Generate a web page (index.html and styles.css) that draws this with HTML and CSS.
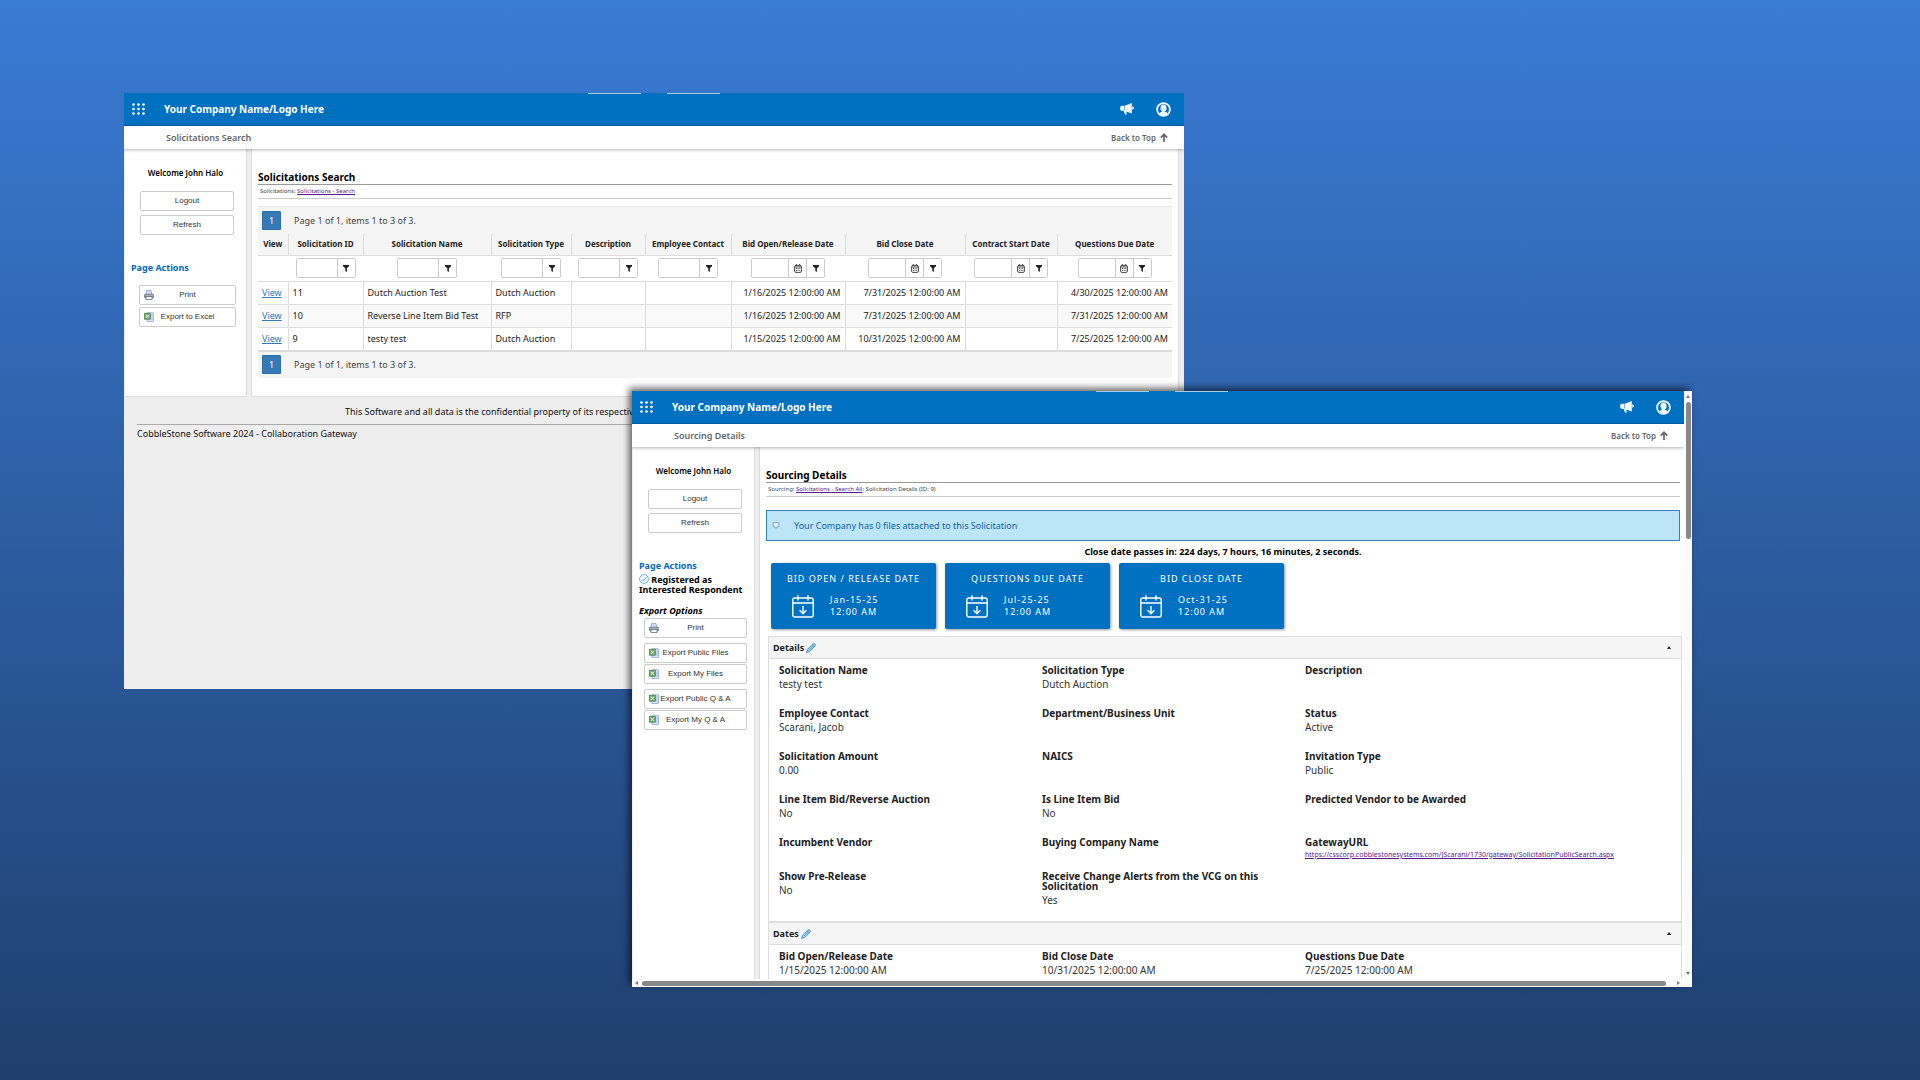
FILE: index.html
```html
<!DOCTYPE html>
<html lang="en">
<head>
<meta charset="utf-8">
<title>Collaboration Gateway</title>
<link rel="stylesheet" href="styles.css">
</head>
<body>
<svg class="defs" aria-hidden="true">
  <symbol id="dots" viewBox="0 0 13 12"><g fill="#fff"><circle cx="1.5" cy="1.5" r="1.3"/><circle cx="6.5" cy="1.5" r="1.3"/><circle cx="11.5" cy="1.5" r="1.3"/><circle cx="1.5" cy="6" r="1.3"/><circle cx="6.5" cy="6" r="1.3"/><circle cx="11.5" cy="6" r="1.3"/><circle cx="1.5" cy="10.5" r="1.3"/><circle cx="6.5" cy="10.5" r="1.3"/><circle cx="11.5" cy="10.5" r="1.3"/></g></symbol>
  <symbol id="horn" viewBox="0 0 14 12"><g fill="#f2f8fc"><path d="M4.600 2.800 L11.800 0 V10.400 L4.600 7.900Z"/><path d="M1.500 2.700H4.200V7.900H1.500Q.1 7.500.1 5.300T1.500 2.700Z"/><path d="M3.500 7.500H6L6.800 11Q6 12 5 11.500Z"/><path d="M12.200 3.300Q14 3.800 14 5T12.200 6.800Z"/></g></symbol>
  <symbol id="user" viewBox="0 0 15 15"><circle cx="7.500" cy="7.500" r="6.400" fill="none" stroke="#f2f8fc" stroke-width="1.800"/><ellipse cx="7.500" cy="6.200" rx="3" ry="3.600" fill="#f2f8fc"/><path d="M3 12.200Q3.500 10.200 6.200 9.800V8.500H8.800V9.800Q11.500 10.200 12 12.200Q10 14 7.500 14T3 12.200Z" fill="#f2f8fc"/></symbol>
  <symbol id="up" viewBox="0 0 8 9"><path d="M4 9V1.500M.8 4.600L4 1.300L7.200 4.600" fill="none" stroke="#666" stroke-width="1.700"/></symbol>
  <symbol id="funnel" viewBox="0 0 6 7"><path d="M0 0H6V1.200L3.900 3.200V7L2.300 6V3.200L0 1.200Z" fill="#222"/></symbol>
  <symbol id="cal" viewBox="0 0 8 9"><rect x=".6" y="1.400" width="6.800" height="7" rx="1.300" fill="none" stroke="#444"/><path d="M.6 3H7.400M2.300 0V2M5.700 0V2" stroke="#444" fill="none"/><path d="M2 4.600H6.200M2 6.400H6.200" stroke="#555" stroke-dasharray="1 .6" fill="none"/></symbol>
  <symbol id="bigcal" viewBox="0 0 22 23"><g fill="none" stroke="#fff" stroke-width="1.400"><rect x=".8" y="3" width="20.400" height="19" rx="2"/><path d="M1 8H21M6 .3V5.500M16 .3V5.500M11 11V18.500M7.600 15.300L11 18.700L14.400 15.300"/></g></symbol>
  <symbol id="printer" viewBox="0 0 10 10"><path d="M2.500.5H7L8 4.500H2Z" fill="#cfe2f8" stroke="#7d9cc5" stroke-width=".7"/><rect x=".5" y="4.200" width="9" height="3.800" rx="1" fill="#a9b0ba" stroke="#59626e" stroke-width=".7"/><rect x="2" y="6.500" width="6" height="3" fill="#eef4fb" stroke="#59626e" stroke-width=".7"/></symbol>
  <symbol id="excel" viewBox="0 0 10 10"><rect x="3" y=".8" width="6.500" height="8.700" fill="#dce7fa" stroke="#7f9fd8" stroke-width=".7"/><path d="M6.500 3H9M6.500 5H9M6.500 7H9" stroke="#8aa9dd" stroke-width=".6"/><rect x=".4" y="1.200" width="6" height="6" fill="#6aa56a" stroke="#3f7a45" stroke-width=".6"/><path d="M1.800 2.600L5 6M5 2.600L1.800 6" stroke="#fff" stroke-width="1"/></symbol>
  <symbol id="pencil" viewBox="0 0 10 10"><path d="M.6 9.400L1.400 6.400L6.800 1Q8 .2 9 1.100T9 3.200L3.600 8.500Z" fill="#9fd0f0" stroke="#3f87bd" stroke-width=".8"/><path d="M2.800 7.200L7.500 2.500M5.900 1.900L8.100 4.100" stroke="#3f87bd" stroke-width=".6"/></symbol>
  <symbol id="check" viewBox="0 0 10 10"><circle cx="5" cy="5" r="4.400" fill="none" stroke="#3f9ad8" stroke-width=".8"/><path d="M2.800 5.200L4.500 6.900L7.800 2.900" fill="none" stroke="#3f9ad8" stroke-width=".9"/></symbol>
  <symbol id="bubble" viewBox="0 0 8 7"><path d="M1.200.6H6.800V4.800H5L4 6.400L3 4.800H1.200Z" fill="#e6f3ff" stroke="#7a90c8" stroke-width=".8"/></symbol>
</svg>

<main class="desktop">
  <section class="window search-window">
    <div class="view">
      <header class="topbar">
        <svg class="i-dots"><use href="#dots"/></svg>
        <span class="brand">Your Company Name/Logo Here</span>
        <svg class="i-horn"><use href="#horn"/></svg>
        <svg class="i-user"><use href="#user"/></svg>
        <i class="tick tick-a"></i><i class="tick tick-b"></i>
      </header>
      <div class="subbar"><span class="crumb-title">Solicitations Search</span><a class="top-link" href="#">Back to Top <svg class="i-up"><use href="#up"/></svg></a></div>
      <div class="columns">
        <aside class="side">
          <p class="welcome">Welcome John Halo</p>
          <div class="session"><button class="btn">Logout</button><button class="btn">Refresh</button></div>
          <h2 class="side-head">Page Actions</h2>
          <div class="actions">
            <button class="btn"><svg class="i-btn"><use href="#printer"/></svg>Print</button>
            <button class="btn"><svg class="i-btn"><use href="#excel"/></svg>Export to Excel</button>
          </div>
        </aside>
        <div class="content">
          <h1 class="title">Solicitations Search</h1>
          <nav class="path">Solicitations: <a href="#">Solicitations - Search</a></nav>
          <div class="grid">
            <div class="pager"><button class="page">1</button>Page 1 of 1, items 1 to 3 of 3.</div>
            <table class="data">
              <colgroup><col class="w30"><col class="w75"><col class="w128"><col class="w80"><col class="w74"><col class="w86"><col class="w114"><col class="w120"><col class="w92"><col></colgroup>
              <thead>
                <tr><th>View</th><th>Solicitation ID</th><th>Solicitation Name</th><th>Solicitation Type</th><th>Description</th><th>Employee Contact</th><th>Bid Open/Release Date</th><th>Bid Close Date</th><th>Contract Start Date</th><th>Questions Due Date</th></tr>
                <tr class="filters">
                  <td></td>
                  <td><div class="filter"><input aria-label="Filter Solicitation ID"><button aria-label="Filter"><svg class="i-funnel"><use href="#funnel"/></svg></button></div></td>
                  <td><div class="filter"><input aria-label="Filter Solicitation Name"><button aria-label="Filter"><svg class="i-funnel"><use href="#funnel"/></svg></button></div></td>
                  <td><div class="filter"><input aria-label="Filter Solicitation Type"><button aria-label="Filter"><svg class="i-funnel"><use href="#funnel"/></svg></button></div></td>
                  <td><div class="filter"><input aria-label="Filter Description"><button aria-label="Filter"><svg class="i-funnel"><use href="#funnel"/></svg></button></div></td>
                  <td><div class="filter"><input aria-label="Filter Employee Contact"><button aria-label="Filter"><svg class="i-funnel"><use href="#funnel"/></svg></button></div></td>
                  <td><div class="filter date"><input aria-label="Filter Bid Open/Release Date"><button aria-label="Calendar"><svg class="i-cal"><use href="#cal"/></svg></button><button aria-label="Filter"><svg class="i-funnel"><use href="#funnel"/></svg></button></div></td>
                  <td><div class="filter date"><input aria-label="Filter Bid Close Date"><button aria-label="Calendar"><svg class="i-cal"><use href="#cal"/></svg></button><button aria-label="Filter"><svg class="i-funnel"><use href="#funnel"/></svg></button></div></td>
                  <td><div class="filter date"><input aria-label="Filter Contract Start Date"><button aria-label="Calendar"><svg class="i-cal"><use href="#cal"/></svg></button><button aria-label="Filter"><svg class="i-funnel"><use href="#funnel"/></svg></button></div></td>
                  <td><div class="filter date"><input aria-label="Filter Questions Due Date"><button aria-label="Calendar"><svg class="i-cal"><use href="#cal"/></svg></button><button aria-label="Filter"><svg class="i-funnel"><use href="#funnel"/></svg></button></div></td>
                </tr>
              </thead>
              <tbody>
                <tr><td><a href="#">View</a></td><td>11</td><td>Dutch Auction Test</td><td>Dutch Auction</td><td></td><td></td><td class="num">1/16/2025 12:00:00 AM</td><td class="num">7/31/2025 12:00:00 AM</td><td></td><td class="num">4/30/2025 12:00:00 AM</td></tr>
                <tr><td><a href="#">View</a></td><td>10</td><td>Reverse Line Item Bid Test</td><td>RFP</td><td></td><td></td><td class="num">1/16/2025 12:00:00 AM</td><td class="num">7/31/2025 12:00:00 AM</td><td></td><td class="num">7/31/2025 12:00:00 AM</td></tr>
                <tr><td><a href="#">View</a></td><td>9</td><td>testy test</td><td>Dutch Auction</td><td></td><td></td><td class="num">1/15/2025 12:00:00 AM</td><td class="num">10/31/2025 12:00:00 AM</td><td></td><td class="num">7/25/2025 12:00:00 AM</td></tr>
              </tbody>
            </table>
            <div class="pager pager-end"><button class="page">1</button>Page 1 of 1, items 1 to 3 of 3.</div>
          </div>
        </div>
      </div>
      <footer class="foot">
        <p class="notice">This Software and all data is the confidential property of its respective</p>
        <p class="copy">CobbleStone Software 2024 - Collaboration Gateway</p>
      </footer>
    </div>
  </section>

  <section class="window details-window">
    <div class="view">
      <header class="topbar">
        <svg class="i-dots"><use href="#dots"/></svg>
        <span class="brand">Your Company Name/Logo Here</span>
        <svg class="i-horn"><use href="#horn"/></svg>
        <svg class="i-user"><use href="#user"/></svg>
        <i class="tick tick-a"></i><i class="tick tick-b"></i>
      </header>
      <div class="subbar"><span class="crumb-title">Sourcing Details</span><a class="top-link" href="#">Back to Top <svg class="i-up"><use href="#up"/></svg></a></div>
      <div class="columns">
        <aside class="side">
          <p class="welcome">Welcome John Halo</p>
          <div class="session"><button class="btn">Logout</button><button class="btn">Refresh</button></div>
          <h2 class="side-head">Page Actions</h2>
          <p class="registered"><svg class="i-check"><use href="#check"/></svg> Registered as Interested Respondent</p>
          <h3 class="export-head">Export Options</h3>
          <div class="exports">
            <button class="btn"><svg class="i-btn"><use href="#printer"/></svg>Print</button>
            <div class="pair">
              <button class="btn"><svg class="i-btn"><use href="#excel"/></svg>Export Public Files</button>
              <button class="btn"><svg class="i-btn"><use href="#excel"/></svg>Export My Files</button>
            </div>
            <div class="pair">
              <button class="btn"><svg class="i-btn"><use href="#excel"/></svg>Export Public Q &amp; A</button>
              <button class="btn"><svg class="i-btn"><use href="#excel"/></svg>Export My Q &amp; A</button>
            </div>
          </div>
        </aside>
        <div class="content">
          <h1 class="title">Sourcing Details</h1>
          <nav class="path">Sourcing: <a href="#">Solicitations - Search All</a>: Solicitation Details (ID: 9)</nav>
          <div class="banner"><svg class="i-bubble"><use href="#bubble"/></svg>Your Company has 0 files attached to this Solicitation</div>
          <p class="countdown">Close date passes in: 224 days, 7 hours, 16 minutes, 2 seconds.</p>
          <div class="cards">
            <article class="card"><h2>BID OPEN / RELEASE DATE</h2><div class="when"><svg class="i-bigcal"><use href="#bigcal"/></svg><p>Jan-15-25<br>12:00 AM</p></div></article>
            <article class="card"><h2>QUESTIONS DUE DATE</h2><div class="when"><svg class="i-bigcal"><use href="#bigcal"/></svg><p>Jul-25-25<br>12:00 AM</p></div></article>
            <article class="card"><h2>BID CLOSE DATE</h2><div class="when"><svg class="i-bigcal"><use href="#bigcal"/></svg><p>Oct-31-25<br>12:00 AM</p></div></article>
          </div>
          <section class="panel">
            <h2 class="panel-head">Details<svg class="i-pencil"><use href="#pencil"/></svg><i class="caret"></i></h2>
            <dl class="fields">
              <div><dt>Solicitation Name</dt><dd>testy test</dd></div>
              <div><dt>Solicitation Type</dt><dd>Dutch Auction</dd></div>
              <div><dt>Description</dt></div>
              <div><dt>Employee Contact</dt><dd>Scarani, Jacob</dd></div>
              <div><dt>Department/Business Unit</dt></div>
              <div><dt>Status</dt><dd>Active</dd></div>
              <div><dt>Solicitation Amount</dt><dd>0.00</dd></div>
              <div><dt>NAICS</dt></div>
              <div><dt>Invitation Type</dt><dd>Public</dd></div>
              <div><dt>Line Item Bid/Reverse Auction</dt><dd>No</dd></div>
              <div><dt>Is Line Item Bid</dt><dd>No</dd></div>
              <div><dt>Predicted Vendor to be Awarded</dt></div>
              <div><dt>Incumbent Vendor</dt></div>
              <div><dt>Buying Company Name</dt></div>
              <div><dt>GatewayURL</dt><dd class="url"><a href="#">https://csscorp.cobblestonesystems.com/JScarani/1730/gateway/SolicitationPublicSearch.aspx</a></dd></div>
              <div><dt>Show Pre-Release</dt><dd>No</dd></div>
              <div><dt>Receive Change Alerts from the VCG on this Solicitation</dt><dd>Yes</dd></div>
            </dl>
          </section>
          <section class="panel">
            <h2 class="panel-head">Dates<svg class="i-pencil"><use href="#pencil"/></svg><i class="caret"></i></h2>
            <dl class="fields">
              <div><dt>Bid Open/Release Date</dt><dd>1/15/2025 12:00:00 AM</dd></div>
              <div><dt>Bid Close Date</dt><dd>10/31/2025 12:00:00 AM</dd></div>
              <div><dt>Questions Due Date</dt><dd>7/25/2025 12:00:00 AM</dd></div>
            </dl>
          </section>
        </div>
      </div>
    </div>
    <div class="vbar"><i class="arrow-up"></i><i class="thumb"></i><i class="arrow-down"></i></div>
    <div class="hbar"><i class="arrow-left"></i><i class="thumb"></i><i class="arrow-right"></i></div>
  </section>
</main>
</body>
</html>
```
FILE: styles.css
```css
* { box-sizing: border-box; }
html { height: 100%; }
body {
  margin: 0;
  min-height: 100%;
  font: 9px/12px "Noto Sans", "Open Sans", sans-serif;
  color: #222;
  background: linear-gradient(#3a7bd5, #1f3f6e) no-repeat;
}
h1, h2, h3, p, dl, dd { margin: 0; }
a { color: #337ab7; }
svg { display: block; flex: none; }
button, input { margin: 0; padding: 0; font: inherit; color: inherit; }
button { cursor: pointer; }
.defs { position: absolute; width: 0; height: 0; }
.desktop { position: relative; min-height: 100vh; overflow: hidden; }

/* Windows on the desktop */
.window { position: absolute; width: 1060px; height: 596px; overflow: hidden; background: #eee; }
.search-window { left: 124px; top: 93px; }
.details-window {
  left: 632px; top: 391px;
  display: grid;
  grid-template: minmax(0, 1fr) 8px / minmax(0, 1fr) 8px;
  background: #fafafa;
  box-shadow: -3px -3px 7px rgba(0, 0, 0, .6);
}
.view { min-width: 0; overflow: hidden; background: #eee; }

.topbar {
  position: relative;
  display: flex; align-items: center;
  height: 33px; padding: 0 13px 0 8px;
  background: #0070c1;
  border-bottom: 1px solid #005da8;
  color: #fff;
}
.brand { flex: 1; margin-left: 19px; font-size: 10px; font-weight: 700; }
.i-dots { width: 13px; height: 12px; }
.i-horn { width: 14px; height: 12px; margin-right: 22px; }
.i-user { width: 15px; height: 15px; }
.tick { position: absolute; top: 0; width: 53px; height: 1px; background: #a9cbe8; }
.tick-a { left: 464px; }
.tick-b { left: 543px; }

.subbar {
  position: relative;
  display: flex; align-items: center; justify-content: space-between;
  height: 23px; padding: 0 16px 0 42px;
  background: #fff;
  box-shadow: 0 1px 3px rgba(0, 0, 0, .3);
  color: #666;
}
.crumb-title { font-weight: 600; }
.top-link { display: flex; align-items: center; gap: 4px; color: #666; font-size: 8px; font-weight: 600; text-decoration: none; }
.i-up { width: 8px; height: 9px; }

.columns { display: flex; gap: 4px; padding-left: 1px; }
.side { width: 122px; padding: 18px 6px 0; background: #fff; border-right: 1px solid #ddd; border-bottom: 1px solid #ddd; }
.content { flex: 1; min-width: 0; padding: 21px 6px 18px; background: #fff; border: 1px solid #ddd; border-top: 0; }
.search-window .content { margin-right: 5px; }

/* Sidebar */
.welcome { font-size: 8px; font-weight: 600; text-align: center; color: #000; }
.session { display: grid; gap: 4px; padding: 12px 6px 0 9px; }
.btn {
  position: relative;
  height: 20px;
  background: #fff; border: 1px solid #ccc; border-radius: 2px;
  color: #333; font: 8px/18px "Liberation Sans", Arial, sans-serif;
  text-align: center;
}
.i-btn { position: absolute; left: 4px; top: 4px; width: 10px; height: 10px; }
.side-head { margin-top: 26px; font-size: 9px; line-height: 14px; color: #0068bd; }
.actions { display: grid; gap: 2px; padding: 10px 4px 0 8px; }
.registered { margin-top: 1px; font-weight: 700; line-height: 10px; color: #000; }
.i-check { display: inline-block; width: 10px; height: 10px; vertical-align: -1px; }
.export-head { margin-top: 9px; font-size: 9px; font-style: italic; line-height: 14px; color: #000; }
.exports { display: grid; gap: 5px; margin: 0 -6px 0 -1px; padding: 0 7px 0 6px; }
.pair { display: grid; gap: 1px; }

/* Page heading */
.title { border-bottom: 1px solid #999; font-size: 10px; line-height: 14px; color: #000; }
.path { padding-left: 2px; border-bottom: 1px solid #ccc; font-size: 6px; line-height: 13px; color: #444; }
.path a, .url a { color: #551a8b; }

/* Results grid */
.grid { margin-top: 7px; background: #f5f5f5; border-top: 1px solid #e5e5e5; }
.pager { display: flex; align-items: center; gap: 13px; height: 27px; padding: 0 4px; color: #444; }
.page { width: 19px; height: 19px; border: 1px solid #2e6da4; border-radius: 1px; background: #337ab7; color: #fff; }
.pager-end { border-top: 1px solid #ddd; }
.data { width: 100%; border-collapse: collapse; table-layout: fixed; background: #fff; }
.w30 { width: 30px; } .w75 { width: 75px; } .w128 { width: 128px; } .w80 { width: 80px; } .w74 { width: 74px; }
.w86 { width: 86px; } .w114 { width: 114px; } .w120 { width: 120px; } .w92 { width: 92px; }
.data th { height: 21px; padding: 0; background: #f5f5f5; border-right: 1px solid #ddd; border-bottom: 1px solid #ddd; font-size: 8px; white-space: nowrap; }
.data td { height: 23px; padding: 0 4px; border-right: 1px solid #ddd; border-bottom: 1px solid #ddd; white-space: nowrap; }
.data th:last-child, .data td:last-child { border-right: 0; }
.data tbody tr:nth-child(even) { background: #f9f9f9; }
.data .filters td { height: 26px; padding: 0; border-right: 0; }
.data .num { text-align: right; }
.filter { display: grid; grid-template-columns: 40px 18px; width: 60px; height: 20px; margin: 0 auto; border: 1px solid #ccc; border-radius: 2px; overflow: hidden; }
.filter.date { grid-template-columns: 36px 18px 18px; width: 74px; }
.filter input { width: 100%; min-width: 0; border: 0; outline: 0; background: #fff; }
.filter button { display: grid; place-items: center; border: 0; border-left: 1px solid #ccc; background: #fff; }
.i-funnel { width: 6px; height: 7px; }
.i-cal { width: 8px; height: 9px; }

.foot { padding: 8px 13px; color: #111; }
.notice { padding: 0 0 5px 208px; border-bottom: 1px solid #aaa; line-height: 14px; }
.copy { line-height: 18px; }

/* Sourcing details */
.details-window .content { padding: 21px 4px 0 6px; border-right: 0; }
.banner {
  display: flex; align-items: center; gap: 14px;
  height: 31px; margin-top: 13px; padding-left: 5px;
  background: #bce5f7; border: 1px solid #3a7fbd; color: #0f5fa8;
}
.i-bubble { width: 8px; height: 7px; }
.countdown { margin: 5px 0; font-weight: 700; text-align: center; color: #000; }
.cards { display: flex; gap: 9px; padding: 0 5px; }
.card { width: 165px; height: 66px; padding-top: 10px; border-radius: 2px; background: #0070c1; box-shadow: 1px 1px 3px rgba(0, 0, 0, .4); color: #fff; }
.card h2 { font-size: 9px; font-weight: 400; letter-spacing: 1px; text-align: center; }
.when { display: flex; align-items: center; gap: 16px; padding: 9px 0 0 21px; letter-spacing: 1px; }
.i-bigcal { width: 22px; height: 23px; }
.panel { margin: 0 -2px 0 2px; border: 1px solid #ddd; }
.cards + .panel { margin-top: 7px; }
.panel-head { display: flex; align-items: center; height: 22px; padding: 0 10px 0 4px; background: #f5f5f5; border-bottom: 1px solid #ddd; font-size: 9px; }
.i-pencil { width: 10px; height: 10px; margin-left: 2px; }
.caret { margin-left: auto; border: 2px solid transparent; border-top: 0; border-bottom: 3px solid #222; }
.fields { display: grid; grid-template-columns: repeat(3, 263px); row-gap: 8px; padding: 6px 10px 5px; }
.fields dt { padding-right: 40px; font-size: 10px; font-weight: 700; line-height: 10px; }
.fields dd { padding-bottom: 7px; font-size: 10px; line-height: 18px; color: #333; }
.fields .url { padding: 0; font-size: 7px; line-height: 16px; }

/* Scroll bars */
.vbar, .hbar { display: flex; align-items: center; background: #fafafa; }
.vbar { flex-direction: column; padding: 4px 0; }
.hbar { padding: 0 4px 0 3px; }
.vbar .thumb { width: 5px; height: 137px; margin: 4px 0 auto; border-radius: 3px; background: #888; }
.hbar .thumb { width: 1024px; height: 5px; margin: 0 auto 0 4px; border-radius: 3px; background: #888; }
.arrow-up, .arrow-down { border: 2px solid transparent; }
.arrow-up { border-top: 0; border-bottom: 3px solid #777; }
.arrow-down { border-bottom: 0; border-top: 3px solid #777; }
.arrow-left, .arrow-right { border: 2px solid transparent; }
.arrow-left { border-left: 0; border-right: 3px solid #777; }
.arrow-right { border-right: 0; border-left: 3px solid #777; }
```
